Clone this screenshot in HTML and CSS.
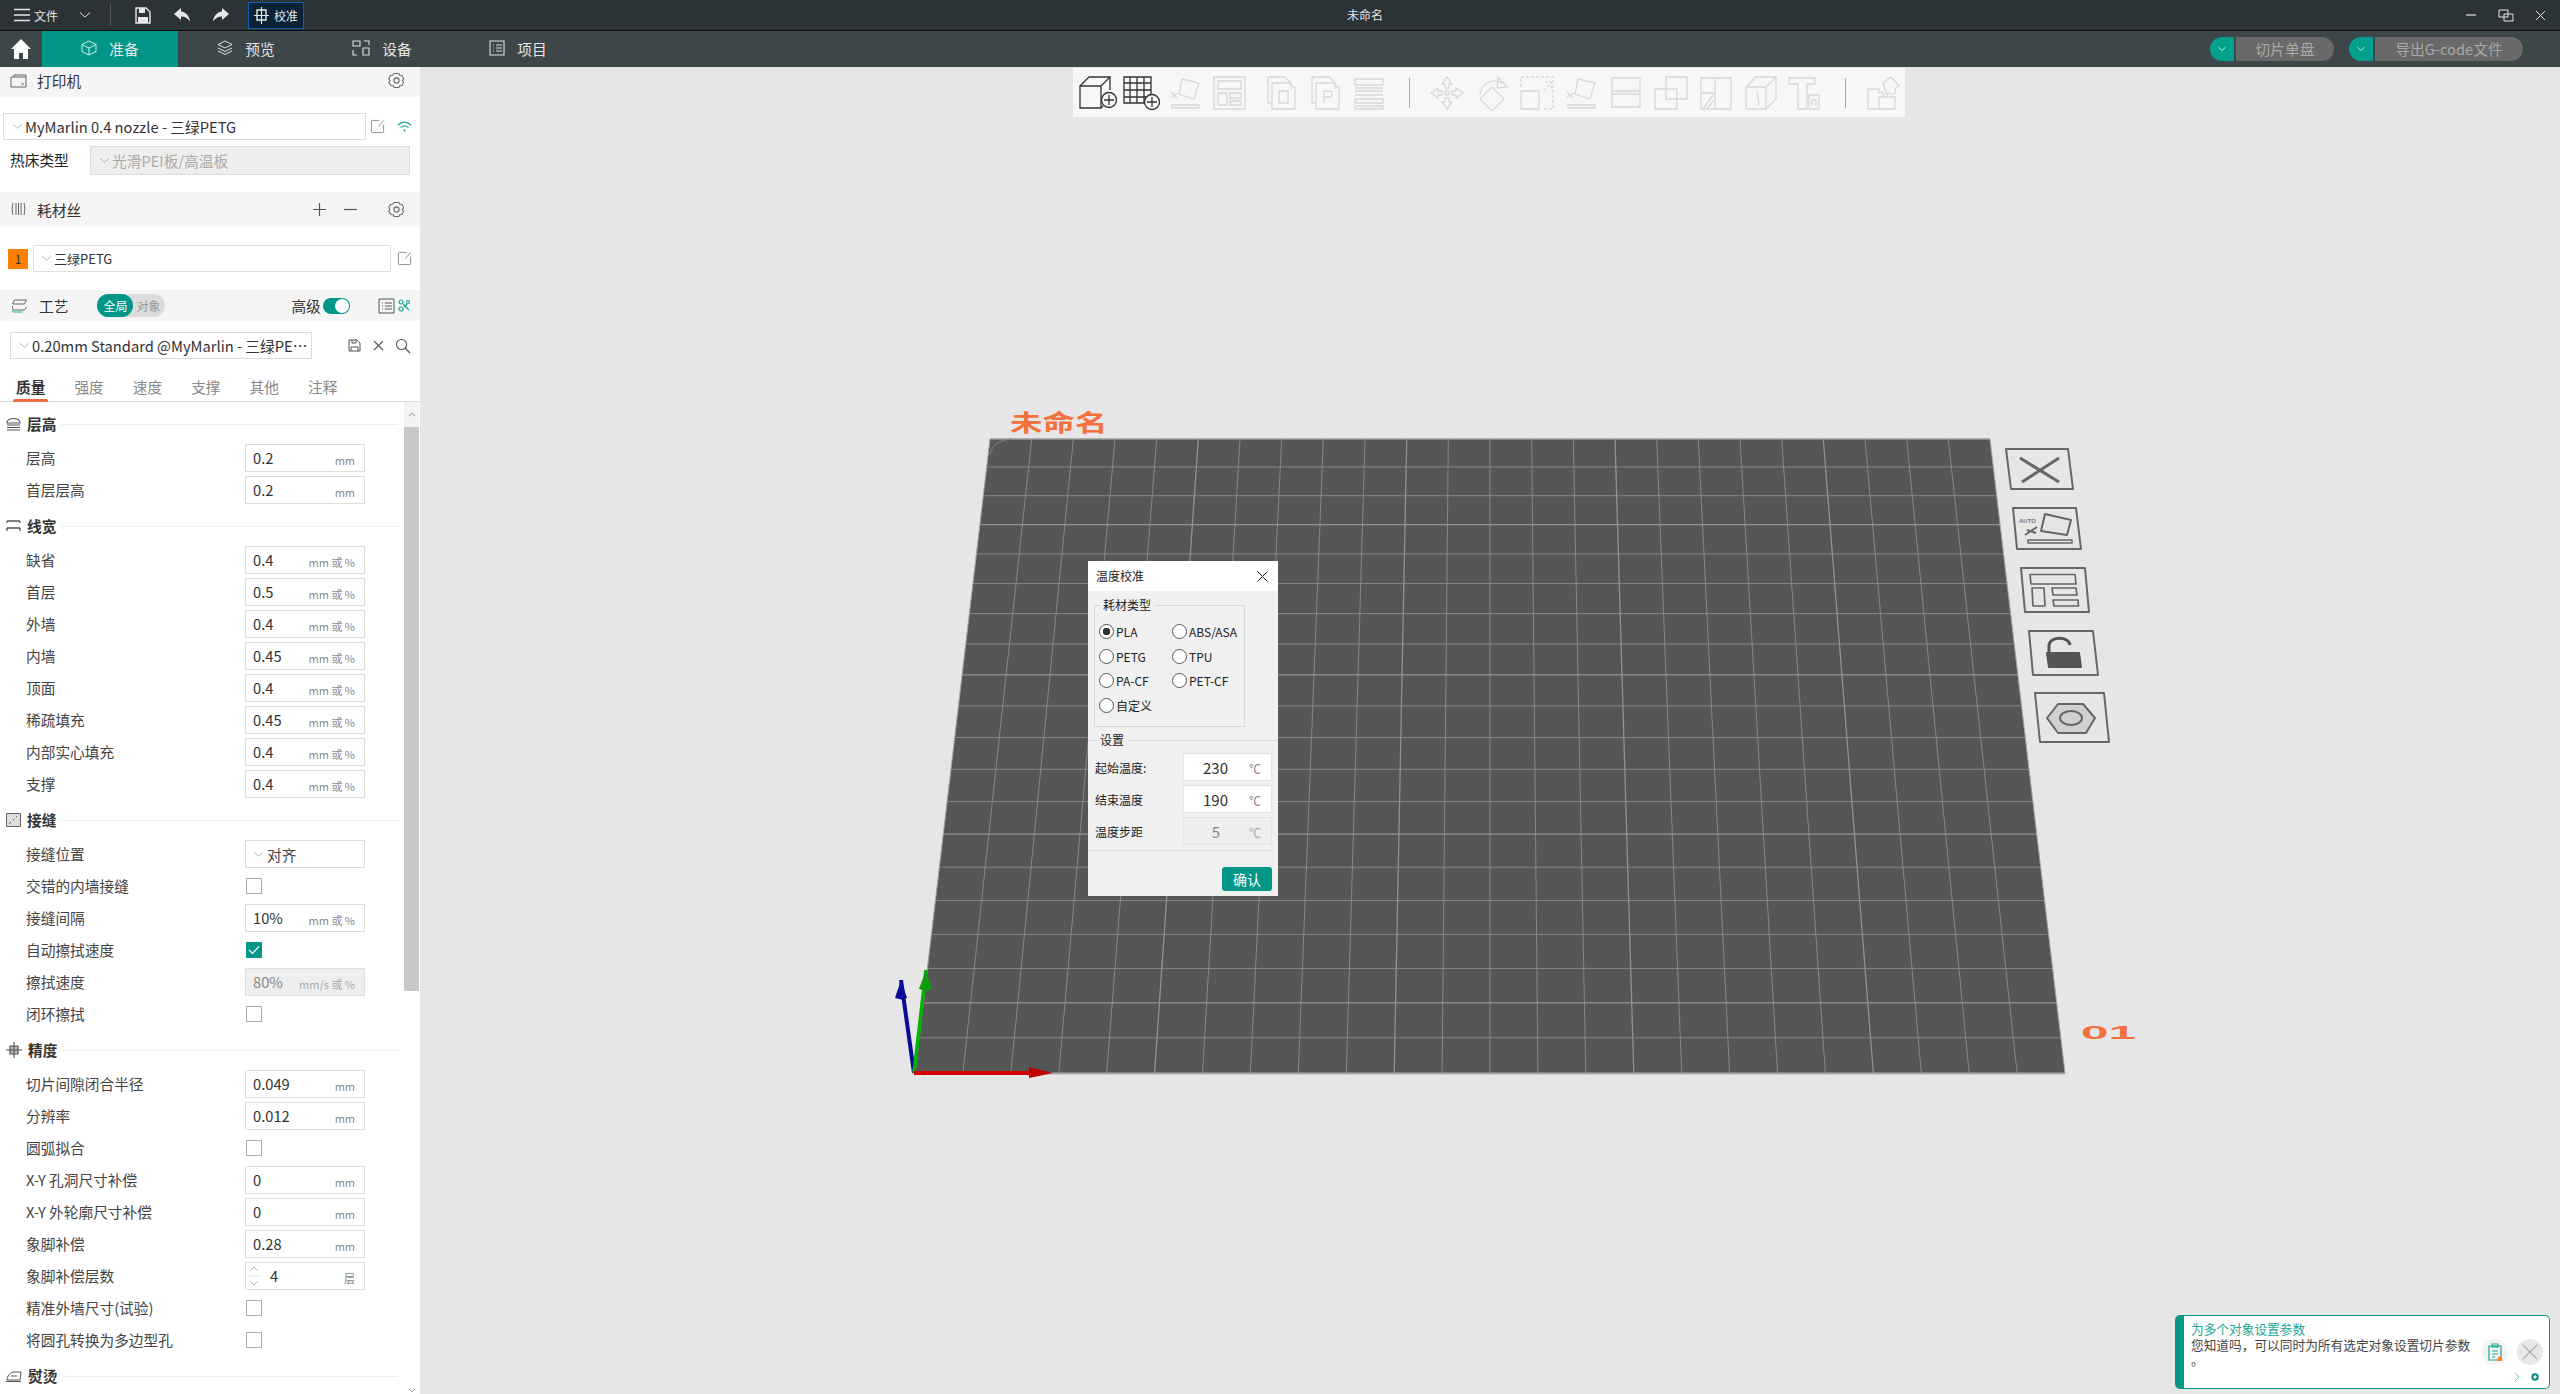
FILE: index.html
```html
<!DOCTYPE html>
<html lang="zh-CN">
  <head>
    <meta charset="UTF-8" />
    <title>未命名</title>
    <link rel="stylesheet" href="styles.css">
  </head>
  <body>
    <svg class="defs" width="0" height="0">
      <symbol id="gear" viewBox="0 0 18 18"><path d="M6.5 1.5h5l1 2 2.3.2 1.7 3.3-1.3 2 1.3 2-1.7 3.300-2.300.2-1 2h-5l-1-2-2.300-.2L.8 11l1.300-2L.8 7l1.700-3.300 2.300-.2z" fill="none" stroke="currentColor" stroke-width="1.100"/><circle cx="9" cy="9" r="2.800" fill="none" stroke="currentColor" stroke-width="1.100"/></symbol>
      <symbol id="edit" viewBox="0 0 16 16"><path d="M10 1.500H2.500a1 1 0 0 0-1 1v11a1 1 0 0 0 1 1h11a1 1 0 0 0 1-1V6M14.500 1.500 9 8" fill="none" stroke="currentColor" stroke-width="1"/></symbol>
      <symbol id="chev" viewBox="0 0 12 8"><path d="M1 1.500 6 6l5-4.500" fill="none" stroke="currentColor" stroke-width="1"/></symbol>
    </svg>

    <div class="app">
      <header class="titlebar">
        <svg class="t-menu" width="16" height="14" viewBox="0 0 16 14"><path d="M0 1.500h16M0 7h16M0 12.500h16" stroke="#e6e6e6" stroke-width="1.300"/></svg>
        <span class="t-file">文件</span>
        <svg class="t-chev" width="12" height="8"><use href="#chev" color="#ddd"/></svg>
        <span class="t-sep"></span>
        <svg class="t-save" width="16" height="17" viewBox="0 0 16 17"><path d="M1 1h10l4 4v11H1z" fill="none" stroke="#e8e8e8" stroke-width="1.400"/><path d="M4 1h6v5H4zM3 10h10v6H3z" fill="#e8e8e8"/></svg>
        <svg class="t-undo" width="17" height="14" viewBox="0 0 17 14"><path d="M7 0 0 6l7 6V8.500c4 0 6.500 1.500 9 5C15.500 8 12 4 7 3.500z" fill="#e8e8e8"/></svg>
        <svg class="t-redo" width="17" height="14" viewBox="0 0 17 14"><path d="M10 0l7 6-7 6V8.500c-4 0-6.500 1.500-9 5C1.500 8 5 4 10 3.500z" fill="#e8e8e8"/></svg>
        <span class="t-calib">
          <svg width="15" height="17" viewBox="0 0 15 17"><path d="M3 3h9v10H3z" fill="none" stroke="#e8e8e8" stroke-width="1.400"/><path d="M7.500 0v17M0 8.500h15" stroke="#e8e8e8" stroke-width="1.200"/></svg>
          校准
        </span>
        <span class="t-title">未命名</span>
        <span class="win-btns">
          <svg width="12" height="12" viewBox="0 0 12 12"><path d="M1 6h10" stroke="#e6e6e6" stroke-width="1.200"/></svg>
          <svg width="16" height="13" viewBox="0 0 16 13"><path d="M1 1h9v7H1zM6 5h9v7H6z" fill="none" stroke="#e6e6e6" stroke-width="1"/></svg>
          <svg width="11" height="11" viewBox="0 0 11 11"><path d="M1 1l9 9M10 1l-9 9" stroke="#e6e6e6" stroke-width="1"/></svg>
        </span>
      </header>

      <nav class="tabbar">
        <svg class="home" width="20" height="20" viewBox="0 0 20 20"><path d="M10 0 0 10h3v10h5v-6h4v6h5V10h3z" fill="#fff"/></svg>
        <a class="nav-tab active">
          <svg width="16" height="16" viewBox="0 0 16 16"><path d="M8 1l7 3.500v7L8 15l-7-3.500v-7zM1 4.500 8 8l7-3.500M8 8v7" fill="none" stroke="#d8efe9" stroke-width="1"/></svg>
          准备
        </a>
        <a class="nav-tab">
          <svg width="16" height="16" viewBox="0 0 16 16"><path d="M8 1l7 3.500L8 8 1 4.500zM1 8l7 3.500L15 8M1 11l7 3.500 7-3.500" fill="none" stroke="#dfe3e3" stroke-width="1"/></svg>
          预览
        </a>
        <a class="nav-tab">
          <svg width="18" height="16" viewBox="0 0 18 16"><path d="M1 1h7v5H1zM12 1h5v4M1 10v5h4M11 8h6v7h-6z" fill="none" stroke="#dfe3e3" stroke-width="1.100"/></svg>
          设备
        </a>
        <a class="nav-tab">
          <svg width="16" height="16" viewBox="0 0 16 16"><path d="M1 1h14v14H1zM4 5h1M7 5h6M4 8h1M7 8h6M4 11h1M7 11h6" fill="none" stroke="#dfe3e3" stroke-width="1.100"/></svg>
          项目
        </a>
        <span class="slice-btn first"><i><svg width="10" height="6"><use href="#chev" color="#fff"/></svg></i><b>切片单盘</b></span>
        <span class="slice-btn second"><i><svg width="10" height="6"><use href="#chev" color="#fff"/></svg></i><b>导出G-code文件</b></span>
      </nav>

      <div class="workspace">
        <aside class="sidebar">
          <div class="panel-head printer-head">
            <svg class="head-icon" width="17" height="14" viewBox="0 0 17 14"><path d="M1 3h15v10H1zM4 3V1h12v2M11 10h3" fill="none" stroke="#666" stroke-width="1"/></svg>
            <span class="head-name">打印机</span>
            <svg class="head-gear" width="16" height="16"><use href="#gear" color="#666"/></svg>
          </div>
          <div class="printer-row">
            <div class="combo printer-combo"><svg width="11" height="7"><use href="#chev" color="#aaa"/></svg>MyMarlin 0.4 nozzle - 三绿PETG</div>
            <svg class="edit" width="15" height="15"><use href="#edit" color="#888"/></svg>
            <svg class="wifi" width="15" height="11" viewBox="0 0 15 11"><path d="M1 4c4-3.500 9-3.500 13 0M3.500 6.500c2.500-2 5.500-2 8 0" fill="none" stroke="#1aa894" stroke-width="1.200"/><circle cx="7.500" cy="9.500" r="1.100" fill="#1aa894"/></svg>
          </div>
          <div class="bed-row">
            <span class="bed-label">热床类型</span>
            <div class="combo bed-combo"><svg width="11" height="7"><use href="#chev" color="#aaa"/></svg>光滑PEI板/高温板</div>
          </div>

          <div class="panel-head filament-head">
            <svg class="head-icon" width="14" height="14" viewBox="0 0 14 14"><path d="M1.500 1c-1 3-1 9 0 12M4.500 1v12M7 1v12M9.500 1v12M12.500 1c1 3 1 9 0 12" fill="none" stroke="#666" stroke-width="1"/></svg>
            <span class="head-name">耗材丝</span>
            <svg class="head-plus" width="13" height="13" viewBox="0 0 13 13"><path d="M6.500 0v13M0 6.500h13" stroke="#555" stroke-width="1.200"/></svg>
            <svg class="head-minus" width="13" height="13" viewBox="0 0 13 13"><path d="M0 6.500h13" stroke="#555" stroke-width="1.200"/></svg>
            <svg class="head-gear" width="16" height="16"><use href="#gear" color="#666"/></svg>
          </div>
          <div class="filament-row">
            <span class="swatch">1</span>
            <div class="combo filament-combo"><svg width="11" height="7"><use href="#chev" color="#aaa"/></svg>三绿PETG</div>
            <svg class="edit" width="15" height="15"><use href="#edit" color="#888"/></svg>
          </div>

          <div class="panel-head process-head">
            <svg class="head-icon" width="16" height="14" viewBox="0 0 16 14"><path d="M3 1h12l-2 4H1zM1 7c0 2 0 3 1 4h11l2-3" fill="none" stroke="#666" stroke-width="1"/><path d="M1 11c0 1 0 2 1 2h9" fill="none" stroke="#1aa894" stroke-width="1"/></svg>
            <span class="head-name">工艺</span>
            <span class="scope"><b>全局</b><span>对象</span></span>
            <span class="adv">高级</span>
            <span class="switch"></span>
            <svg class="list-icon" width="17" height="16" viewBox="0 0 17 16"><path d="M1 1h15v14H1zM4 5h1M7 5h7M4 8h1M7 8h7M4 11h1M7 11h7" fill="none" stroke="#555" stroke-width="1"/></svg>
            <svg class="tree-icon" width="13" height="13" viewBox="0 0 13 13"><g fill="none" stroke="#1aa894" stroke-width="1.200"><circle cx="3" cy="3" r="2"/><circle cx="10" cy="3" r="1.500"/><circle cx="3" cy="10" r="2"/><path d="M5 5l6 6M6 8l3-3"/></g></svg>
          </div>
          <div class="preset-row">
            <div class="combo preset-combo"><svg width="11" height="7"><use href="#chev" color="#aaa"/></svg><span class="clip">0.20mm Standard @MyMarlin - 三绿PETG</span></div>
            <svg class="preset-save" width="13" height="13" viewBox="0 0 13 13"><path d="M1 1h8l3 3v8H1zM4 1v3h4V1M3 12V8h7v4" fill="none" stroke="#555" stroke-width="1"/></svg>
            <svg class="preset-del" width="11" height="11" viewBox="0 0 11 11"><path d="M1 1l9 9M10 1l-9 9" stroke="#555" stroke-width="1.100"/></svg>
            <svg class="preset-find" width="16" height="16" viewBox="0 0 16 16"><circle cx="6.500" cy="6.500" r="5" fill="none" stroke="#555" stroke-width="1.100"/><path d="M10 10l5 5" stroke="#555" stroke-width="1.200"/></svg>
          </div>
          <div class="param-tabs">
            <a class="active">质量</a><a>强度</a><a>速度</a><a>支撑</a><a>其他</a><a>注释</a>
          </div>

          <div class="params">
            <div class="param-list">
              <div class="group-head first">
                <svg width="15" height="14" viewBox="0 0 15 14"><path d="M1 6c0-6 13-6 13 0zM1 8h13M1 10.500h13M1 13h13" fill="none" stroke="#555" stroke-width="1.200"/></svg>
                <span>层高</span>
              </div>
              <div class="row"><label>层高</label><div class="field"><em>0.2</em><small>mm</small></div></div>
              <div class="row"><label>首层层高</label><div class="field"><em>0.2</em><small>mm</small></div></div>

              <div class="group-head">
                <svg width="15" height="12" viewBox="0 0 15 12"><path d="M1 1h13M1 8h13M1 1v2M14 1v2M1 8v3M14 8v3" fill="none" stroke="#555" stroke-width="1.300"/></svg>
                <span>线宽</span>
              </div>
              <div class="row"><label>缺省</label><div class="field"><em>0.4</em><small>mm 或 %</small></div></div>
              <div class="row"><label>首层</label><div class="field"><em>0.5</em><small>mm 或 %</small></div></div>
              <div class="row"><label>外墙</label><div class="field"><em>0.4</em><small>mm 或 %</small></div></div>
              <div class="row"><label>内墙</label><div class="field"><em>0.45</em><small>mm 或 %</small></div></div>
              <div class="row"><label>顶面</label><div class="field"><em>0.4</em><small>mm 或 %</small></div></div>
              <div class="row"><label>稀疏填充</label><div class="field"><em>0.45</em><small>mm 或 %</small></div></div>
              <div class="row"><label>内部实心填充</label><div class="field"><em>0.4</em><small>mm 或 %</small></div></div>
              <div class="row"><label>支撑</label><div class="field"><em>0.4</em><small>mm 或 %</small></div></div>

              <div class="group-head">
                <svg width="15" height="14" viewBox="0 0 15 14"><path d="M.5.500h14v13H.5z" fill="#ddd" stroke="#666"/><path d="M3 11l2-2M7 7l1-1M10 4l1-1" stroke="#666"/></svg>
                <span>接缝</span>
              </div>
              <div class="row"><label>接缝位置</label><div class="combo row-combo"><svg width="11" height="7"><use href="#chev" color="#aaa"/></svg>对齐</div></div>
              <div class="row"><label>交错的内墙接缝</label><span class="check"></span></div>
              <div class="row"><label>接缝间隔</label><div class="field"><em>10%</em><small>mm 或 %</small></div></div>
              <div class="row"><label>自动擦拭速度</label><span class="check on"><svg width="12" height="10" viewBox="0 0 12 10"><path d="M1 5l3.500 3.500L11 1.500" fill="none" stroke="#fff" stroke-width="1.200"/></svg></span></div>
              <div class="row"><label>擦拭速度</label><div class="field off"><em>80%</em><small>mm/s 或 %</small></div></div>
              <div class="row"><label>闭环擦拭</label><span class="check"></span></div>

              <div class="group-head">
                <svg width="16" height="16" viewBox="0 0 16 16"><path d="M4 4h8v8H4z" fill="#bbb" stroke="#555" stroke-width="1.200"/><path d="M8 0v16M0 8h16" stroke="#555" stroke-width="1.200"/></svg>
                <span>精度</span>
              </div>
              <div class="row"><label>切片间隙闭合半径</label><div class="field"><em>0.049</em><small>mm</small></div></div>
              <div class="row"><label>分辨率</label><div class="field"><em>0.012</em><small>mm</small></div></div>
              <div class="row"><label>圆弧拟合</label><span class="check"></span></div>
              <div class="row"><label>X-Y 孔洞尺寸补偿</label><div class="field"><em>0</em><small>mm</small></div></div>
              <div class="row"><label>X-Y 外轮廓尺寸补偿</label><div class="field"><em>0</em><small>mm</small></div></div>
              <div class="row"><label>象脚补偿</label><div class="field"><em>0.28</em><small>mm</small></div></div>
              <div class="row"><label>象脚补偿层数</label><div class="field spin">
                <svg width="12" height="24" viewBox="0 0 12 24"><path d="M2 7l4-4 4 4M2 17l4 4 4-4" fill="none" stroke="#bbb" stroke-width="1"/><path d="M0 12h12" stroke="#e4e4e4"/></svg>
                <em>4</em><small>层</small></div></div>
              <div class="row"><label>精准外墙尺寸(试验)</label><span class="check"></span></div>
              <div class="row"><label>将圆孔转换为多边型孔</label><span class="check"></span></div>

              <div class="group-head">
                <svg width="16" height="12" viewBox="0 0 16 12"><path d="M1 10c0-4 3-7 6-8h8l-1 8zM5 6h6M0 11.500h15" fill="none" stroke="#555" stroke-width="1"/></svg>
                <span>熨烫</span>
              </div>
            </div>
            <div class="scrollbar">
              <span class="sb-up"><svg width="8" height="5"><use href="#chev" color="#555" transform="rotate(180 4 2.500)"/></svg></span>
              <span class="sb-thumb"></span>
              <span class="sb-down"><svg width="8" height="5"><use href="#chev" color="#555"/></svg></span>
            </div>
          </div>
        </aside>

        <main class="viewport">
          <svg class="scene" viewBox="420 67 2140 1327" width="2140" height="1327">
            <path d="M990 439H1990L2065 1073H915Z" fill="#555655"/>
            <g stroke="#868686" stroke-width="1">
              <path d="M1031.700 439L962.900 1073M1073.300 439L1010.800 1073M1115 439L1058.800 1073M1156.700 439L1106.700 1073M1240 439L1202.500 1073M1281.700 439L1250.400 1073M1323.300 439L1298.300 1073M1365 439L1346.300 1073M1448.300 439L1442.100 1073M1490 439L1490 1073M1531.700 439L1537.900 1073M1573.300 439L1585.800 1073M1656.700 439L1681.700 1073M1698.300 439L1729.600 1073M1740 439L1777.500 1073M1781.700 439L1825.400 1073M1865 439L1921.300 1073M1906.700 439L1969.200 1073M1948.300 439L2017.100 1073"/>
              <path d="M986.700 467H1993.300M983.300 495.700H1996.700M976.400 553.900H2003.600M972.900 583.600H2007.100M969.300 613.600H2010.700M965.700 644H2014.300M958.400 705.900H2021.600M954.700 737.500H2025.300M950.900 769.300H2029.100M947.100 801.600H2032.900M939.300 867.200H2040.700M935.400 900.600H2044.600M931.400 934.300H2048.600M927.400 968.400H2052.600M919.200 1037.800H2060.800"/>
            </g>
            <g stroke="#929292" stroke-width="1.300">
              <path d="M1198.300 439L1154.600 1073M1406.700 439L1394.200 1073M1615 439L1633.800 1073M1823.300 439L1873.300 1073"/>
              <path d="M979.900 524.600H2000.100M962.100 674.800H2017.900M943.200 834.200H2036.800M923.300 1002.900H2056.700"/>
            </g>
            <path d="M990 439H1990" stroke="#9a9a9a" stroke-width="1.500"/>
            <path d="M915 1073.500H2065" stroke="#aaa" stroke-width="2"/>
            <path d="M990 439L915 1073M1990 439L2065 1073" stroke="#a5a5a5" stroke-width="1"/>
            <path d="M1012 439c-14 1-20 6-22 16" fill="none" stroke="#858585" stroke-width="1"/>

            <text class="plate-name" transform="translate(1010 431) scale(1.300 .92)">未命名</text>
            <text class="plate-num" transform="translate(2081 1039) scale(2.350 .9)">01</text>

            <path d="M914 1073 901 980" stroke="#0a0a96" stroke-width="4"/>
            <path d="M901 980l-6 18 6 1.500 6-1.500z" fill="#0a0a96"/>
            <path d="M914 1073 926 970" stroke="#00b400" stroke-width="3.500"/>
            <path d="M926 970l-7 19 6 1.500 7-1z" fill="#0f9a0f"/>
            <path d="M914 1073h118" stroke="#d40000" stroke-width="4"/>
            <path d="M1053 1073l-24-6v11z" fill="#c00000"/>

            <g class="plate-btns" fill="none" stroke="#666" stroke-width="2" stroke-linejoin="round">
              <path d="M2006 449H2068L2073 489H2011Z"/>
              <path d="M2020 458L2059 482M2059 458L2022 482" stroke-width="3"/>
              <path d="M2013 508H2076L2081 549H2017Z"/>
              <path d="M2045 514L2071 520 2067 535 2041 531Z"/>
              <path d="M2028 540H2072v3H2028Z" stroke-width="1.500"/>
              <path d="M2025 535L2037 527M2027 530L2036 533" stroke-width="2"/>
              <text class="auto-mark" x="2019" y="523">AUTO</text>
              <path d="M2021 568H2085L2089 612H2025Z"/>
              <path d="M2030 574.500H2075L2076 584H2031ZM2032 588H2044L2045 606H2033ZM2052 588H2076L2077 595H2053ZM2053 600H2078L2078.500 606H2054Z" stroke-width="1.700"/>
              <path d="M2029 631H2093L2098 675H2033Z"/>
              <path d="M2049 653V645c1-9 20-9 21 0" stroke="#555" stroke-width="3"/>
              <path d="M2047 653H2079L2081 667H2049Z" fill="#555" stroke="#555"/>
              <path d="M2035 693H2104L2109 742H2040Z"/>
              <path d="M2047 718L2058 704H2083L2095 718 2086 733H2058Z" fill="#d0d0d0"/>
              <ellipse cx="2071" cy="718" rx="11" ry="7"/>
            </g>
          </svg>

          <div class="toolbar">
            <svg class="tool" viewBox="0 0 44 36"><g class="ink"><path d="M5 11H26V33H5ZM5 11L14 2H35L26 11M35 2V15M26 33L28 31"/><circle cx="34" cy="25" r="7.500"/><path d="M34 20v10M29 25h10"/></g></svg>
            <svg class="tool" viewBox="0 0 44 36"><g class="ink"><path d="M5 2H32V28H5ZM11 2V28M18 2V28M25 2V28M5 8H32M5 15H32M5 22H32"/><circle cx="33" cy="27" r="7.500" fill="#f7f7f7"/><path d="M33 22v10M28 27h10"/></g></svg>
            <svg class="tool" viewBox="0 0 44 36"><g><path d="M19 4L36 8 31 24 16 19ZM9 30H36V33H9ZM8 22L15 18M8 17L14 23"/></g></svg>
            <svg class="tool" viewBox="0 0 44 36"><path d="M7 2H38V34H7ZM11 6H34V14H11ZM11 18H20V30H11ZM23 18H34V23H23ZM23 26H34V30H23Z"/></svg>
            <svg class="tool gap" viewBox="0 0 44 36"><path d="M9 2H26L32 8V14M9 2V28H13M13 8H30L36 13V34H13ZM20 16H29V28H20Z"/></svg>
            <svg class="tool" viewBox="0 0 44 36"><path d="M9 2H26L32 8V14M9 2V28H13M13 8H30L36 13V34H13ZM21 28V16H26C30 16 30 22 26 22H21"/></svg>
            <svg class="tool" viewBox="0 0 44 36"><path d="M8 4H36V10H8ZM8 13H36M8 16H36M8 20H36M8 24H36V28H8ZM8 31H36V34H8Z"/></svg>
            <span class="tool-sep"></span>
            <svg class="tool" viewBox="0 0 44 36"><path d="M22 2L27 9H24V13H20V9H17ZM22 34L27 27H24V23H20V27H17ZM6 18L13 13V16H17V20H13V23ZM38 18L31 13V16H27V20H31V23Z"/><circle cx="22" cy="18" r="2"/></svg>
            <svg class="tool" viewBox="0 0 44 36"><path d="M22 12L34 24 22 36 10 24ZM10 20C10 9 24 2 32 8M28 2L37 12 27 13Z"/></svg>
            <svg class="tool dashed" viewBox="0 0 44 36"><path d="M6 16H24V34H6Z"/><path class="dash" d="M6 12V2H38V34H28M29 16L36 7M30 7H36V13"/></svg>
            <svg class="tool" viewBox="0 0 44 36"><path d="M19 4L36 8 31 24 16 19ZM9 30H36V33H9ZM8 22L15 18M8 17L14 23"/></svg>
            <svg class="tool" viewBox="0 0 44 36"><path d="M8 3H36V32H8ZM8 16H36M8 19H36"/></svg>
            <svg class="tool" viewBox="0 0 44 36"><path d="M6 14H28V34H6ZM17 2H38V24H17ZM17 14H28V24H17Z"/></svg>
            <svg class="tool" viewBox="0 0 44 36"><path d="M8 3H38V34H8ZM8 18H22V34H8ZM22 3V18"/><path d="M10 34L20 20M14 34L20 26" /></svg>
            <svg class="tool" viewBox="0 0 44 36"><path d="M8 12H28V34H8ZM8 12L18 2H38L28 12M38 2V24L28 34M19 16L21 30"/></svg>
            <svg class="tool" viewBox="0 0 44 36"><path d="M6 3H32V9H24V34H15V9H6ZM26 20H36V34H26ZM29 31V26C29 24 33 24 33 26V31"/></svg>
            <span class="tool-sep"></span>
            <svg class="tool" viewBox="0 0 44 36"><path d="M7 14H18V18C20 16 24 18 22 22H18V34H7ZM22 22H34V34H18M22 8L30 2 38 11 34 14C36 18 30 22 28 18L26 20Z"/></svg>
          </div>

          <section class="dialog">
            <div class="dlg-title">
              <span>温度校准</span>
              <svg width="11" height="11" viewBox="0 0 11 11"><path d="M.5.500l10 10M10.500.500l-10 10" stroke="#222" stroke-width="1"/></svg>
            </div>
            <fieldset class="dlg-type">
              <legend>耗材类型</legend>
              <div class="radios">
                <span class="radio on">PLA</span><span class="radio">ABS/ASA</span>
                <span class="radio">PETG</span><span class="radio">TPU</span>
                <span class="radio">PA-CF</span><span class="radio">PET-CF</span>
                <span class="radio">自定义</span>
              </div>
            </fieldset>
            <fieldset class="dlg-set">
              <legend>设置</legend>
              <div class="dlg-row"><label>起始温度:</label><div class="dlg-input"><em>230</em><small>℃</small></div></div>
              <div class="dlg-row"><label>结束温度</label><div class="dlg-input"><em>190</em><small>℃</small></div></div>
              <div class="dlg-row"><label>温度步距</label><div class="dlg-input off"><em>5</em><small>℃</small></div></div>
            </fieldset>
            <div class="dlg-foot"><button>确认</button></div>
          </section>

          <aside class="tip">
            <div class="tip-text">
              <h4>为多个对象设置参数</h4>
              <p>您知道吗，可以同时为所有选定对象设置切片参数<br>。</p>
            </div>
            <span class="tip-round clip-btn">
              <svg width="14" height="18" viewBox="0 0 14 18"><path d="M1 3h12v14H1zM4 1h6v3H4zM4 8h6M4 11h6M4 14h3" fill="none" stroke="#1aa894" stroke-width="1.200"/><circle cx="12" cy="16" r="2.500" fill="#ff7f1e"/></svg>
            </span>
            <span class="tip-round close-btn">
              <svg width="16" height="16" viewBox="0 0 16 16"><path d="M1 1l14 14M15 1L1 15" stroke="#aaa" stroke-width="1.100"/></svg>
            </span>
            <svg class="tip-next" width="6" height="10" viewBox="0 0 6 10"><path d="M1 1l4 4-4 4" fill="none" stroke="#6fc4b8" stroke-width="1"/></svg>
            <svg class="tip-gear" width="8" height="8" viewBox="0 0 8 8"><circle cx="4" cy="4" r="2.700" fill="none" stroke="#00897b" stroke-width="2"/></svg>
          </aside>
        </main>
      </div>
    </div>
  </body>
</html>
```

FILE: styles.css
```css
* {
  box-sizing: border-box;
}
html,
body {
  margin: 0;
  padding: 0;
}
body {
  font-family: "Noto Sans CJK SC", "Noto Sans", sans-serif;
  font-size: 14.7px;
  color: #333;
  background: #e6e6e6;
  overflow: hidden;
}
em {
  font-style: normal;
}
svg {
  flex: none;
  display: block;
}
.defs {
  position: absolute;
}
.app {
  display: flex;
  flex-direction: column;
  width: 2560px;
  height: 1394px;
  overflow: hidden;
}

/* title bar */
.titlebar {
  display: flex;
  align-items: center;
  height: 31px;
  background: #2b3337;
  border-bottom: 1px solid #0c0c0c;
  color: #e6e6e6;
  font-size: 12px;
  position: relative;
}
.t-menu {
  margin-left: 14px;
}
.t-file {
  margin-left: 4px;
  width: 28px;
}
.t-chev {
  margin-left: 17px;
}
.t-sep {
  width: 1px;
  height: 22px;
  background: #555;
  margin-left: 19px;
}
.t-save {
  margin-left: 24px;
}
.t-undo {
  margin-left: 23px;
}
.t-redo {
  margin-left: 21px;
}
.t-calib {
  display: flex;
  align-items: center;
  gap: 5px;
  margin-left: 19px;
  width: 56px;
  height: 27px;
  padding-left: 5px;
  background: #0d2236;
  border: 1px solid #0a5fb4;
}
.t-title {
  position: absolute;
  left: 1347px;
  top: 6px;
}
.win-btns {
  display: flex;
  align-items: center;
  gap: 21px;
  margin-left: auto;
  margin-right: 14px;
}

/* main tabs */
.tabbar {
  display: flex;
  align-items: center;
  height: 36px;
  background: #3d4649;
  color: #e6e6e6;
}
.home {
  margin: 0 11px;
}
.nav-tab {
  display: flex;
  align-items: center;
  justify-content: center;
  gap: 12px;
  width: 136px;
  height: 36px;
  padding-bottom: 2px;
}
.nav-tab.active {
  background: #009688;
}
.slice-btn {
  display: flex;
  height: 24px;
  gap: 2px;
}
.slice-btn.first {
  margin-left: 1624px;
  width: 124px;
}
.slice-btn.second {
  margin-left: 15px;
  width: 174px;
}
.slice-btn i {
  display: flex;
  align-items: center;
  justify-content: center;
  width: 24px;
  background: #00a08c;
  border-radius: 12px 0 0 12px;
}
.slice-btn b {
  flex: 1;
  font-weight: 400;
  font-size: 14.7px;
  line-height: 24px;
  text-align: center;
  color: #a8a8a8;
  background: #696969;
  border-radius: 0 12px 12px 0;
}

/* sidebar */
.workspace {
  display: flex;
  flex: 1;
  min-height: 0;
}
.sidebar {
  display: flex;
  flex-direction: column;
  width: 420px;
  background: #fff;
}
.panel-head {
  display: flex;
  align-items: center;
  background: #f5f5f5;
}
.printer-head {
  height: 30px;
  padding-bottom: 3px;
}
.filament-head {
  height: 35px;
  margin-top: 17px;
  padding-bottom: 1px;
}
.process-head {
  height: 31px;
  margin-top: 18px;
}
.head-icon {
  margin-left: 10px;
  width: 17px;
}
.head-name {
  margin-left: 10px;
}
.head-gear {
  position: relative;
  margin-left: auto;
  margin-right: 15px;
}
.printer-head .head-gear,
.filament-head .head-gear {
  width: 17px;
  height: 17px;
}
.head-plus {
  margin-left: 232px;
}
.head-minus {
  margin-left: 18px;
}
.combo {
  display: flex;
  align-items: center;
  gap: 2px;
  height: 27px;
  padding-left: 8px;
  border: 1px solid #dcdcdc;
  background: #fff;
  white-space: nowrap;
}
.printer-row {
  display: flex;
  align-items: center;
  margin-top: 16px;
  padding-left: 3px;
}
.printer-combo {
  width: 363px;
  font-size: 14.7px;
}
.printer-row .edit {
  margin-left: 4px;
}
.wifi {
  margin-left: 12px;
}
.bed-row {
  display: flex;
  align-items: center;
  margin-top: 6px;
  padding-left: 10px;
}
.bed-label {
  width: 80px;
  padding-bottom: 2px;
  color: #222;
}
.bed-combo {
  width: 320px;
  height: 29px;
  background: #eee;
  color: #aaa;
}
.filament-row {
  display: flex;
  align-items: center;
  margin-top: 18px;
  padding-left: 8px;
  font-size: 13px;
}
.swatch {
  width: 20px;
  height: 20px;
  margin-right: 5px;
  background: #ff7f00;
  color: #333;
  font-size: 12px;
  line-height: 20px;
  text-align: center;
}
.filament-combo {
  width: 358px;
  padding-left: 7px;
  font-size: 13px;
}
.filament-row .edit {
  margin-left: 6px;
}
.process-head .head-icon {
  margin-left: 11px;
}
.process-head .head-name {
  margin-left: 11px;
}
.scope {
  display: flex;
  align-items: center;
  width: 68px;
  height: 23px;
  margin-left: 29px;
  background: #dcdcdc;
  border-radius: 12px;
  font-size: 12px;
  color: #999;
}
.scope b {
  width: 36px;
  height: 23px;
  font-weight: 400;
  line-height: 23px;
  text-align: center;
  color: #fff;
  background: #009688;
  border-radius: 12px;
}
.scope span {
  margin-left: 3px;
}
.adv {
  margin-left: 126px;
}
.switch {
  position: relative;
  width: 27px;
  height: 16px;
  margin-left: 2px;
  background: #009688;
  border-radius: 8px;
}
.switch::after {
  content: "";
  position: absolute;
  right: 1px;
  top: 1px;
  width: 14px;
  height: 14px;
  background: #fff;
  border-radius: 50%;
}
.list-icon {
  margin-left: 28px;
}
.tree-icon {
  margin-left: 3px;
}
.preset-row {
  display: flex;
  align-items: center;
  margin-top: 11px;
  padding-left: 10px;
}
.preset-combo {
  width: 302px;
}
.clip {
  overflow: hidden;
  text-overflow: ellipsis;
}
.preset-save {
  margin-left: 36px;
}
.preset-del {
  margin-left: 12px;
}
.preset-find {
  margin-left: 11px;
}
.param-tabs {
  display: flex;
  height: 43px;
  padding-left: 16px;
  gap: 29px;
  border-bottom: 1px solid #ddd;
  color: #888;
  line-height: 56px;
}
.param-tabs a {
  position: relative;
  height: 43px;
  overflow: visible;
}
.param-tabs a.active {
  color: #333;
  font-weight: 700;
}
.param-tabs a.active::after {
  content: "";
  position: absolute;
  left: -3px;
  right: -3px;
  bottom: 0;
  height: 3px;
  background: #f06a40;
  border-radius: 2px 2px 0 0;
}

/* parameter list */
.params {
  display: flex;
  flex: 1;
  min-height: 0;
}
.param-list {
  width: 404px;
  flex: none;
  padding-top: 2px;
  overflow: hidden;
}
.group-head {
  display: flex;
  align-items: center;
  height: 36px;
  margin-top: 2px;
  padding-left: 6px;
  font-weight: 700;
  color: #333;
}
.group-head span {
  margin-left: 6px;
  padding-bottom: 2px;
}
.group-head::after {
  content: "";
  flex: 1;
  height: 1px;
  margin: 0 6px 0 5px;
  background: #eee;
}
.row {
  display: flex;
  align-items: center;
  height: 32px;
  padding-left: 26px;
  color: #444;
}
.row label {
  width: 219px;
  flex: none;
  padding-bottom: 2px;
}
.field {
  display: flex;
  align-items: center;
  width: 120px;
  height: 28px;
  padding: 0 9px 0 7px;
  border: 1px solid #ddd;
  color: #333;
}
.field em {
  flex: 1;
  padding-bottom: 1px;
  font-size: 14.7px;
}
.field small {
  margin-top: 3px;
  font-size: 11px;
  color: #888;
}
.field.off {
  background: #eee;
  color: #888;
}
.field.off small {
  color: #aaa;
}
.field.spin {
  padding-left: 2px;
}
.field.spin em {
  margin-left: 10px;
}
.row-combo {
  width: 120px;
  height: 28px;
  gap: 3px;
  padding-left: 7px;
}
.check {
  display: flex;
  align-items: center;
  justify-content: center;
  width: 16px;
  height: 16px;
  margin-left: 1px;
  border: 1px solid #aaa;
  background: #fff;
}
.check.on {
  border: 0;
  background: #009688;
}
.scrollbar {
  display: flex;
  flex-direction: column;
  width: 15px;
  flex: none;
  background: #fff;
}
.sb-up {
  display: flex;
  align-items: center;
  justify-content: center;
  height: 25px;
  background: #f3f3f3;
}
.sb-thumb {
  height: 564px;
  background: #c8c8c8;
}
.sb-down {
  display: flex;
  justify-content: center;
  margin-top: auto;
  padding-bottom: 1px;
}

/* 3d view */
.viewport {
  position: relative;
  flex: 1;
  background: #e6e6e6;
}
.scene {
  position: absolute;
  left: 0;
  top: 0;
}
.plate-name {
  font-size: 25px;
  font-weight: 700;
  fill: #f4703c;
}
.plate-num {
  font-family: "Liberation Sans", sans-serif;
  font-size: 21px;
  font-weight: 700;
  fill: #f4703c;
}
.auto-mark {
  font-family: "Liberation Sans", sans-serif;
  font-size: 6px;
  font-weight: 700;
  fill: #777;
  stroke: none;
}
.toolbar {
  position: absolute;
  left: 653px;
  top: 1px;
  display: flex;
  align-items: center;
  width: 832px;
  height: 49px;
  padding-left: 2px;
  background: #f7f7f7;
}
.tool {
  width: 44px;
  height: 36px;
  fill: none;
  stroke: #d8d8d8;
  stroke-width: 1.300;
}
.tool.gap {
  margin-left: 8px;
}
.tool-sep ~ .tool {
  margin-left: .7px;
}
.tool .ink {
  stroke: #333;
}
.dash {
  stroke-dasharray: 3 2;
}
.tool-sep {
  width: 1px;
  height: 30px;
  margin: 0 15px 0 18px;
  background: #aaa;
}

/* calibration dialog */
.dialog {
  position: absolute;
  left: 668px;
  top: 494px;
  width: 190px;
  height: 335px;
  background: #f0f0f0;
  font-size: 12px;
  color: #222;
}
.dlg-title {
  display: flex;
  align-items: center;
  justify-content: space-between;
  height: 30px;
  padding: 0 10px 0 8px;
  background: #fff;
}
.dlg-title span {
  padding-bottom: 2px;
}
.dialog fieldset {
  margin: 0;
  padding: 0;
  min-width: 0;
}
.dialog legend {
  padding: 0 3px;
  height: 16px;
  line-height: 16px;
}
.dlg-type {
  width: 151px;
  margin: 6px 0 0 6px !important;
  padding: 7px 0 8px !important;
  border: 1px solid #d8d8d8;
}
.dlg-type legend {
  margin-left: 5px;
}
.radios {
  display: grid;
  grid-template-columns: 73px 1fr;
  grid-auto-rows: 24.600px;
  padding-left: 4px;
}
.radio {
  display: flex;
  align-items: center;
  gap: 2px;
  padding-bottom: 1px;
  white-space: nowrap;
}
.radio::before {
  content: "";
  width: 13px;
  height: 13px;
  border: 1px solid #555;
  border-radius: 50%;
  background: #fff;
}
.radio.on::before {
  background: radial-gradient(circle, #333 0 3.500px, #fff 4px);
}
.dlg-set {
  margin-top: 5px !important;
  padding: 5px 7px 0 !important;
  border: 0;
  border-top: 1px solid #d8d8d8;
}
.dlg-set legend {
  margin-left: 2px;
}
.dlg-row {
  display: flex;
  align-items: center;
  justify-content: space-between;
  height: 28px;
  margin-bottom: 4px;
}
.dlg-input {
  display: flex;
  align-items: center;
  width: 89px;
  height: 28px;
  padding-right: 10px;
  margin-right: -1px;
  background: #fff;
  border: 1px solid #e4e4e4;
  color: #333;
}
.dlg-input em {
  flex: 1;
  padding-right: 21px;
  font-size: 15px;
  text-align: right;
}
.dlg-input small {
  margin-top: 3px;
  font-size: 12px;
  color: #8d7d80;
}
.dlg-input.off {
  background: #eee;
  color: #888;
}
.dlg-input.off em {
  padding-right: 29px;
}
.dlg-input.off small {
  color: #aaa;
}
.dlg-foot {
  display: flex;
  justify-content: flex-end;
  margin: 1px 6px 0 0;
  padding-top: 16px;
  border-top: 1px solid #ddd;
}
.dlg-foot button {
  width: 50px;
  height: 24px;
  padding: 0;
  border: 0;
  border-radius: 3px;
  background: #009688;
  color: #fff;
  font-family: inherit;
  font-size: 14px;
}

/* notification */
.tip {
  position: absolute;
  left: 1755px;
  top: 1248px;
  width: 375px;
  height: 74px;
  background: #fff;
  border: 1px solid #009688;
  border-left-width: 9px;
  border-radius: 5px;
  font-size: 12.700px;
}
.tip-text {
  width: 292px;
  padding: 5px 0 0 7px;
  line-height: 15.500px;
}
.tip-text h4 {
  margin: 0;
  font-weight: 400;
  font-size: 12.700px;
  color: #1aa894;
}
.tip-text p {
  margin: 0;
  color: #444;
}
.tip-round {
  position: absolute;
  top: 23px;
  display: flex;
  align-items: center;
  justify-content: center;
  width: 26px;
  height: 26px;
  border-radius: 50%;
}
.clip-btn {
  left: 298px;
  background: #f3f3f3;
}
.close-btn {
  left: 333px;
  background: #e8e8e8;
}
.tip-next {
  position: absolute;
  left: 330px;
  top: 56px;
}
.tip-gear {
  position: absolute;
  left: 347px;
  top: 57px;
}
```
